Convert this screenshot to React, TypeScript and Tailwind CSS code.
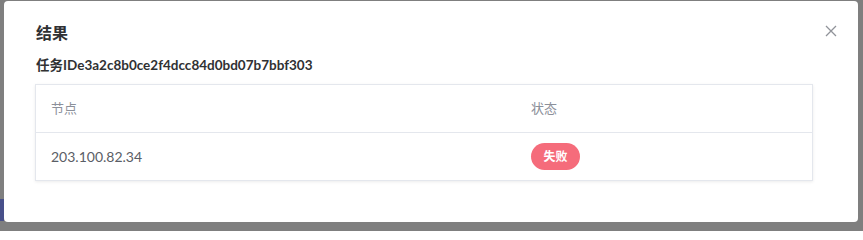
import React from "react";

export default function App() {
  return (
    <div
      className="w-[863px] h-[231px] bg-[#7f7f7f] flex overflow-hidden"
      style={{ fontFamily: 'Lato, "Noto Sans CJK SC", sans-serif' }}
    >
      <div className="w-[4px] shrink-0 flex flex-col">
        <div className="h-[199px]" />
        <div className="h-[22px] bg-[#48508a]" />
      </div>
      <div className="mt-[1px] w-[854px] h-[221px] bg-white rounded-[4px] flex flex-col pl-[31px] pt-[20px] relative">
        <div className="pl-[1px] text-[16px] leading-[24px] font-bold text-[#303133]">结果</div>
        <div className="mt-[10px] pl-[1px] text-[13.5px] leading-[20px] font-bold text-[#303133]">
          任务IDe3a2c8b0ce2f4dcc84d0bd07b7bbf303
        </div>
        <div className="mt-[9px] w-[778px] border border-[#e4e7ed] shadow-[0_1px_3px_rgba(0,0,0,0.08)] flex flex-col">
          <div className="h-[48px] flex items-center text-[13px] text-[#8c909a] border-b border-[#e4e7ed]">
            <div className="w-[495px] pl-[15px]">节点</div>
            <div>状态</div>
          </div>
          <div className="h-[47px] flex items-center">
            <div className="w-[495px] pl-[15px] text-[14px] text-[#5a5e66]">203.100.82.34</div>
            <div className="flex">
              <span className="h-[27px] w-[49px] rounded-full bg-[#f56c7b] text-white text-[12px] font-semibold flex items-center justify-center">
                失败
              </span>
            </div>
          </div>
        </div>
        <button className="absolute top-[24px] right-[21px] w-[12px] h-[12px] text-[#909399]">
          <svg viewBox="0 0 12 12" width="12" height="12" fill="none" stroke="currentColor" strokeWidth="1.3">
            <path d="M1 1 L11 11 M11 1 L1 11" />
          </svg>
        </button>
      </div>
    </div>
  );
}
